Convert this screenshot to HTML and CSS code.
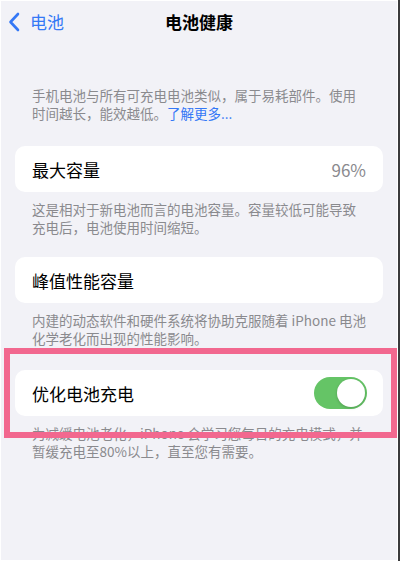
FILE: index.html
```html
<!DOCTYPE html>
<html lang="zh-CN">
<head>
<meta charset="utf-8">
<link rel="stylesheet" href="styles.css">
</head>
<body>
<div class="outer">
  <div class="screen">
    <header class="nav">
      <a class="back">
        <svg class="chev" width="12" height="20" viewBox="0 0 12 20"><path d="M10 2 L2.5 10 L10 18" fill="none" stroke="#3478f6" stroke-width="2.6" stroke-linecap="round" stroke-linejoin="round"/></svg>
        <span>电池</span>
      </a>
      <h1 class="title">电池健康</h1>
    </header>

    <p class="desc first">手机电池与所有可充电电池类似，属于易耗部件。使用时间越长，能效越低。<a class="link">了解更多...</a></p>

    <div class="card"><span class="label">最大容量</span><span class="value">96%</span></div>
    <p class="desc">这是相对于新电池而言的电池容量。容量较低可能导致充电后，电池使用时间缩短。</p>

    <div class="card"><span class="label">峰值性能容量</span></div>
    <p class="desc gap">内建的动态软件和硬件系统将协助克服随着 iPhone 电池化学老化而出现的性能影响。</p>

    <div class="card"><span class="label">优化电池充电</span><span class="toggle"><span class="knob"></span></span></div>
    <p class="desc">为减缓电池老化，iPhone 会学习您每日的充电模式，并暂缓充电至80%以上，直至您有需要。</p>

    <div class="highlight"></div>
  </div>
  <div class="edge"></div>
</div>
</body>
</html>
```

FILE: styles.css
```css
html, body {
  margin: 0;
  padding: 0;
  background: #ffffff;
}
body {
  width: 400px;
  height: 561px;
  overflow: hidden;
  font-family: "Noto Sans CJK SC", "Noto Sans", sans-serif;
}
.outer {
  display: flex;
  width: 400px;
  height: 561px;
}
.screen {
  position: relative;
  width: 396px;
  height: 559px;
  margin: 1px;
  background: #f2f2f7;
  overflow: hidden;
}
.edge {
  width: 2px;
  height: 561px;
  background: #3a3a3c;
}
.nav {
  position: relative;
  height: 42px;
  display: flex;
  align-items: center;
}
.back {
  display: flex;
  align-items: center;
  gap: 10px;
  padding-left: 7px;
  color: #3478f6;
  font-size: 17px;
  line-height: 20px;
}
.chev {
  display: block;
}
.title {
  position: absolute;
  left: 0;
  right: 0;
  top: 10px;
  margin: 0;
  text-align: center;
  font-size: 17px;
  line-height: 22px;
  font-weight: 700;
  color: #000;
}
.desc {
  margin: 8px 14px 21px 14px;
  padding: 0 16px 0 17px;
  font-size: 13.5px;
  line-height: 18px;
  color: #8a8a8e;
}
.desc.first {
  margin-top: 43px;
  margin-bottom: 24px;
}
.desc.gap {
  margin-bottom: 23px;
}
.link {
  color: #3478f6;
}
.card {
  margin: 0 14px;
  height: 46px;
  background: #ffffff;
  border-radius: 10px;
  display: flex;
  align-items: center;
  justify-content: space-between;
  padding: 0 17px;
}
.label {
  font-size: 17px;
  color: #000;
}
.value {
  font-size: 17px;
  color: #8a8a8e;
}
.toggle {
  position: relative;
  width: 53px;
  height: 32px;
  border-radius: 16px;
  background: #65c466;
  margin-right: -1px;
}
.knob {
  position: absolute;
  right: 2px;
  top: 2px;
  width: 28px;
  height: 28px;
  border-radius: 50%;
  background: #ffffff;
  box-shadow: 0 1px 3px rgba(0,0,0,0.2);
}
.highlight {
  position: absolute;
  left: 3px;
  top: 347px;
  width: 381px;
  height: 78px;
  border: 6px solid #f2688f;
}
```
